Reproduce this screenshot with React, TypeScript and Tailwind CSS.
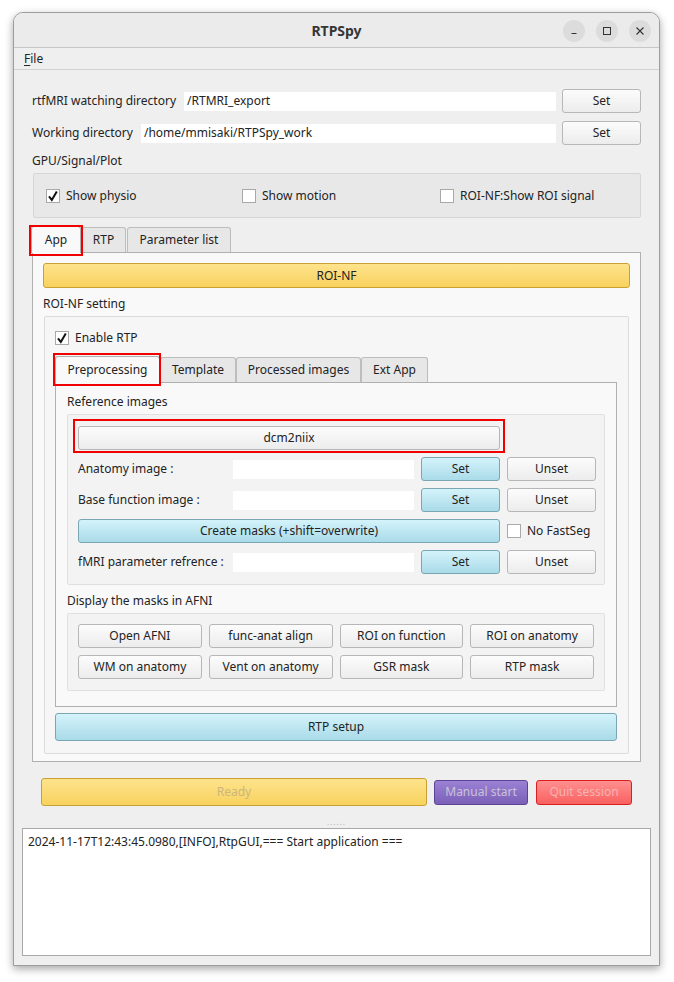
import React from 'react';

type Variant = 'plain' | 'cyan' | 'yellow' | 'purple' | 'red';

const variantClass: Record<Variant, string> = {
  plain: 'bg-gradient-to-b from-[#fcfcfc] to-[#ececec] border-[#b7b7b7] text-[#232323]',
  cyan: 'bg-gradient-to-b from-[#d4f3fb] to-[#a9dbe8] border-[#7ba7b4] text-[#232323]',
  yellow: 'bg-gradient-to-b from-[#fee38c] to-[#f8d25d] border-[#c9a132] text-[#232323]',
  purple: 'bg-gradient-to-b from-[#9b82d4] to-[#7b5fb8] border-[#5c4394] text-[#c9c2d9]',
  red: 'bg-gradient-to-b from-[#ff8f8f] to-[#f86060] border-[#d92020] text-[#f7b3b3]',
};

const Btn = ({
  children,
  variant = 'plain',
  className = '',
}: {
  children: React.ReactNode;
  variant?: Variant;
  className?: string;
}) => (
  <div
    className={`flex items-center justify-center shrink-0 border rounded-[3px] leading-none whitespace-nowrap ${variantClass[variant]} ${className}`}
  >
    {children}
  </div>
);

const Check = ({ checked = false }: { checked?: boolean }) => (
  <span className="w-[14px] h-[14px] bg-white border border-[#a9a9a9] flex items-center justify-center shrink-0">
    {checked && (
      <svg width="12" height="12" viewBox="0 0 12 12">
        <path d="M2 6.4 L4.8 10 L9.8 1.4" stroke="#111" strokeWidth="2" fill="none" />
      </svg>
    )}
  </span>
);

const CheckLabel = ({ label, checked, className = '' }: { label: string; checked?: boolean; className?: string }) => (
  <div className={`flex items-center gap-[6px] whitespace-nowrap ${className}`}>
    <Check checked={checked} />
    <span>{label}</span>
  </div>
);

const Mark = ({ className }: { className: string }) => (
  <span className={`absolute border-2 border-[#f00000] pointer-events-none ${className}`} />
);

const Tab = ({
  label,
  active = false,
  width,
}: {
  label: string;
  active?: boolean;
  width: string;
}) => (
  <div
    className={`flex items-center justify-center shrink-0 border border-b-0 rounded-t-[3px] whitespace-nowrap ${width} ${
      active
        ? 'h-[27px] bg-[#f9f9f9] border-[#b0b0b0] -mb-px z-10 relative'
        : 'h-[25px] bg-[#e7e7e7] border-[#bdbdbd]'
    }`}
  >
    {label}
  </div>
);

const FileRow = ({ label }: { label: string }) => (
  <>
    <div className="flex items-center h-[24px] whitespace-nowrap">{label}</div>
    <div className="flex items-center">
      <div className="w-full h-[19px] bg-white" />
    </div>
    <Btn variant="cyan" className="h-[24px]">Set</Btn>
    <Btn className="h-[24px]">Unset</Btn>
  </>
);

export default function App() {
  return (
    <div className="w-[674px] h-[982px] bg-white font-['Noto_Sans',_'DejaVu_Sans',sans-serif] text-[12px] text-[#232323] pt-[12px] pl-[13px]">
      <div className="w-[647px] h-[954px] flex flex-col border border-[#9c9c9c] rounded-t-[10px] bg-[#efefef] shadow-[0_3px_8px_rgba(0,0,0,0.35)] overflow-hidden">
        {/* title bar */}
        <div className="h-[35px] shrink-0 bg-[#ebebeb] border-b border-[#c6c6c6] relative flex items-center justify-center">
          <span className="font-bold text-[14px] text-[#363636]">RTPSpy</span>
          <div className="absolute right-[8px] top-[7px] flex gap-[11px]">
            <span className="w-[22px] h-[22px] rounded-full bg-[#dcdcdc] flex items-center justify-center">
              <svg width="10" height="10" viewBox="0 0 10 10">
                <path d="M2.5 7.5 H7.5" stroke="#333" strokeWidth="1" />
              </svg>
            </span>
            <span className="w-[22px] h-[22px] rounded-full bg-[#dcdcdc] flex items-center justify-center">
              <svg width="10" height="10" viewBox="0 0 10 10">
                <rect x="1.5" y="1.5" width="7" height="7" stroke="#333" strokeWidth="1" fill="none" />
              </svg>
            </span>
            <span className="w-[22px] h-[22px] rounded-full bg-[#dcdcdc] flex items-center justify-center">
              <svg width="10" height="10" viewBox="0 0 10 10">
                <path d="M1.5 1.5 L8.5 8.5 M8.5 1.5 L1.5 8.5" stroke="#333" strokeWidth="1.1" />
              </svg>
            </span>
          </div>
        </div>

        {/* menu bar */}
        <div className="h-[22px] shrink-0 border-b border-[#d2d2d2] flex items-center pl-[10px]">
          <span>
            <span className="underline underline-offset-2">F</span>ile
          </span>
        </div>

        {/* main */}
        <div className="px-[18px] pt-[19px] flex flex-col shrink-0">
          <div className="flex items-center h-[24px]">
            <span className="shrink-0">rtfMRI watching directory</span>
            <div className="flex-1 h-[19px] bg-white ml-[8px] flex items-center pl-[3px]">/RTMRI_export</div>
            <Btn className="w-[79px] h-[24px] ml-[6px]">Set</Btn>
          </div>
          <div className="flex items-center h-[24px] mt-[8px]">
            <span className="shrink-0">Working directory</span>
            <div className="flex-1 h-[19px] bg-white ml-[8px] flex items-center pl-[3px]">/home/mmisaki/RTPSpy_work</div>
            <Btn className="w-[79px] h-[24px] ml-[6px]">Set</Btn>
          </div>
          <div className="h-[20px] mt-[6px] flex items-center">GPU/Signal/Plot</div>
          <div className="h-[45px] mt-[2px] ml-[1px] shrink-0 border border-[#d6d6d6] bg-[#e8e8e8] rounded-[2px] flex items-center pl-[12px]">
            <CheckLabel label="Show physio" checked className="w-[196px]" />
            <CheckLabel label="Show motion" className="w-[198px]" />
            <CheckLabel label="ROI-NF:Show ROI signal" />
          </div>

          {/* outer tabs */}
          <div className="flex items-end mt-[7px] h-[27px] -ml-[1px] shrink-0">
            <div className="relative">
              <Tab label="App" active width="w-[50px]" />
              <Mark className="-left-[2px] -top-[1px] w-[54px] h-[31px] z-20" />
            </div>
            <Tab label="RTP" width="w-[45px]" />
            <Tab label="Parameter list" width="w-[104px] ml-[1px]" />
          </div>
          <div className="h-[510px] shrink-0 bg-[#f9f9f9] border border-[#b0b0b0] px-[10px] pt-[10px] pb-[9px] flex flex-col">
            <Btn variant="yellow" className="h-[25px] w-full">ROI-NF</Btn>
            <div className="h-[20px] mt-[6px] flex items-center shrink-0">ROI-NF setting</div>
            <div className="flex-1 mt-[2px] ml-[1px] mr-[1px] border border-[#dcdcdc] bg-[#f6f6f6] rounded-[2px] pl-[10px] pr-[11px] pt-[12px] pb-[12px] flex flex-col">
              <CheckLabel label="Enable RTP" checked />

              {/* inner tabs */}
              <div className="flex items-end mt-[8px] h-[27px] shrink-0">
                <div className="relative">
                  <Tab label="Preprocessing" active width="w-[105px]" />
                  <Mark className="-left-[2px] -top-[3px] w-[108px] h-[33px] z-20" />
                </div>
                <Tab label="Template" width="w-[76px]" />
                <Tab label="Processed images" width="w-[125px]" />
                <Tab label="Ext App" width="w-[67px]" />
              </div>
              <div className="h-[325px] shrink-0 bg-[#f9f9f9] border border-[#b0b0b0] px-[11px] pt-[9px] flex flex-col">
                <div className="h-[20px] flex items-center shrink-0">Reference images</div>
                <div className="mt-[2px] shrink-0 border border-[#e0e0e0] bg-[#f3f3f3] rounded-[2px] pl-[10px] pr-[10px] pt-[11px] pb-[10px]">
                  <div className="grid grid-cols-[148px_181px_79px_89px] gap-x-[7px] gap-y-[7px] items-center">
                    <div className="col-span-3 relative">
                      <Btn className="h-[24px] w-full">dcm2niix</Btn>
                      <Mark className="-left-[5px] -top-[7px] -right-[5px] h-[34px]" />
                    </div>
                    <div />
                    <FileRow label="Anatomy image :" />
                    <FileRow label="Base function image :" />
                    <Btn variant="cyan" className="h-[24px] col-span-3">Create masks (+shift=overwrite)</Btn>
                    <CheckLabel label="No FastSeg" />
                    <FileRow label="fMRI parameter refrence :" />
                  </div>
                </div>
                <div className="h-[20px] mt-[6px] flex items-center shrink-0">Display the masks in AFNI</div>
                <div className="mt-[2px] shrink-0 border border-[#e0e0e0] bg-[#f3f3f3] rounded-[2px] pl-[10px] pr-[10px] pt-[10px] pb-[11px]">
                  <div className="grid grid-cols-4 gap-x-[7px] gap-y-[7px]">
                    <Btn className="h-[24px]">Open AFNI</Btn>
                    <Btn className="h-[24px]">func-anat align</Btn>
                    <Btn className="h-[24px]">ROI on function</Btn>
                    <Btn className="h-[24px]">ROI on anatomy</Btn>
                    <Btn className="h-[24px]">WM on anatomy</Btn>
                    <Btn className="h-[24px]">Vent on anatomy</Btn>
                    <Btn className="h-[24px]">GSR mask</Btn>
                    <Btn className="h-[24px]">RTP mask</Btn>
                  </div>
                </div>
              </div>
              <Btn variant="cyan" className="h-[28px] mt-[6px] w-full">RTP setup</Btn>
            </div>
          </div>

          {/* control row */}
          <div className="flex items-center mt-[16px] px-[9px] h-[28px] shrink-0">
            <Btn variant="yellow" className="flex-1 h-[28px]">
              <span className="text-[#cbb67c]">Ready</span>
            </Btn>
            <Btn variant="purple" className="w-[94px] h-[25px] ml-[7px]">Manual start</Btn>
            <Btn variant="red" className="w-[96px] h-[25px] ml-[8px]">Quit session</Btn>
          </div>
        </div>

        {/* splitter */}
        <div className="h-[22px] shrink-0 flex items-end justify-center pb-[2px]">
          <span className="text-[8px] leading-none tracking-[1px] text-[#b0b0b0]">......</span>
        </div>

        {/* log */}
        <div className="mx-[8px] h-[128px] shrink-0 bg-white border border-[#a9a9a9] px-[5px] pt-[4px]">
          2024-11-17T12:43:45.0980,[INFO],RtpGUI,=== Start application ===
        </div>
      </div>
    </div>
  );
}
